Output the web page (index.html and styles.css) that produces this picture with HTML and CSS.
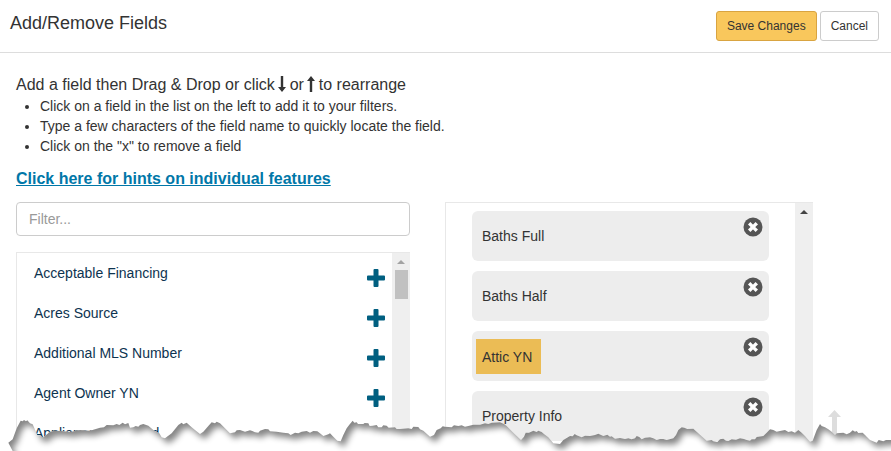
FILE: index.html
```html
<!DOCTYPE html>
<html lang="en">
<head>
    <meta charset="UTF-8">
    <meta name="viewport" content="width=device-width, initial-scale=1.0">
    <title>Add/Remove Fields</title>
    <link rel="stylesheet" href="styles.css">
</head>
<body>
    <!-- icon shapes -->
    <svg class="sprite" aria-hidden="true">
        <symbol id="plus" viewBox="0 0 18 18">
            <path d="M7.5 0h3q1 0 1 1v5.500H17q1 0 1 1v3q0 1-1 1h-5.500V17q0 1-1 1h-3q-1 0-1-1v-5.500H1q-1 0-1-1v-3q0-1 1-1h5.500V1q0-1 1-1z"/>
        </symbol>
        <symbol id="remove" viewBox="0 0 20 20">
            <circle cx="10" cy="10" r="9.500"/>
            <path d="M7.400 7.400l5.200 5.200M12.600 7.400l-5.200 5.200" stroke="#fff" stroke-width="3.400" stroke-linecap="square"/>
        </symbol>
        <symbol id="arrow" viewBox="0 0 8 16">
            <path d="M4 0l4 5H5.200v11H2.800V5H0z"/>
        </symbol>
    </svg>

    <header class="header">
        <h1 class="title">Add/Remove Fields</h1>
        <div class="actions">
            <button class="btn btn-save" type="button">Save Changes</button>
            <button class="btn" type="button">Cancel</button>
        </div>
    </header>

    <main class="content">
        <h2 class="subtitle">Add a field then Drag &amp; Drop or click <svg class="arrow down"><use href="#arrow"/></svg> or <svg class="arrow"><use href="#arrow"/></svg> to rearrange</h2>
        <ul class="tips">
            <li>Click on a field in the list on the left to add it to your filters.</li>
            <li>Type a few characters of the field name to quickly locate the field.</li>
            <li>Click on the "x" to remove a field</li>
        </ul>
        <a class="hints" href="#hints">Click here for hints on individual features</a>

        <div class="columns">
            <section class="available">
                <input class="filter" type="text" placeholder="Filter..." aria-label="Filter">
                <div class="panel">
                    <ul class="fields">
                        <li><button class="field" type="button">Acceptable Financing <svg class="plus"><use href="#plus"/></svg></button></li>
                        <li><button class="field" type="button">Acres Source <svg class="plus"><use href="#plus"/></svg></button></li>
                        <li><button class="field" type="button">Additional MLS Number <svg class="plus"><use href="#plus"/></svg></button></li>
                        <li><button class="field" type="button">Agent Owner YN <svg class="plus"><use href="#plus"/></svg></button></li>
                        <li><button class="field" type="button">Appliances Included</button></li>
                    </ul>
                    <div class="rail">
                        <span class="rail-up"></span>
                        <span class="thumb"></span>
                    </div>
                </div>
            </section>

            <section class="panel">
                <ul class="cards">
                    <li class="card"><span>Baths Full</span><button class="remove" type="button" aria-label="Remove Baths Full"><svg><use href="#remove"/></svg></button></li>
                    <li class="card"><span>Baths Half</span><button class="remove" type="button" aria-label="Remove Baths Half"><svg><use href="#remove"/></svg></button></li>
                    <li class="card"><span class="highlight">Attic YN</span><button class="remove" type="button" aria-label="Remove Attic YN"><svg><use href="#remove"/></svg></button></li>
                    <li class="card"><span>Property Info</span><button class="remove" type="button" aria-label="Remove Property Info"><svg><use href="#remove"/></svg></button></li>
                </ul>
                <div class="rail rail-dark">
                    <span class="rail-up"></span>
                </div>
            </section>
        </div>
    </main>

    <a class="to-top" href="#" aria-label="Back to top"><svg viewBox="0 0 13 27"><path d="M6.500 0L13 7H9v20H4V7H0z"/></svg></a>

    <!-- torn paper edge -->
    <svg class="torn" viewBox="0 0 2673 213" preserveAspectRatio="none" aria-hidden="true">
        <filter id="shade" filterUnits="userSpaceOnUse" x="-60" y="0" width="2800" height="320" color-interpolation-filters="sRGB">
            <feGaussianBlur in="SourceAlpha" stdDeviation="10"/>
            <feOffset dx="11" dy="14" result="moved"/>
            <feFlood flood-color="#858585"/>
            <feComposite operator="out" in2="moved"/>
            <feComposite operator="in" in2="SourceAlpha" result="shadow"/>
            <feMerge><feMergeNode in="SourceGraphic"/><feMergeNode in="shadow"/></feMerge>
        </filter>
        <path fill="#fff" filter="url(#shade)" d="M25 188L38 178L50 145L62 122L68 124L72 120L78 124L82 121L90 130L98 133L112 165L130 172L150 155L165 152L185 153L210 156L240 150L270 152L285 148L300 143L312 142L320 135L340 136L350 132L358 135L368 128L375 133L385 129L390 143L400 142L407 138L415 140L420 135L430 132L445 137L460 150L478 160L485 172L495 175L515 160L535 135L545 128L550 133L560 128L575 142L585 150L600 162L610 155L625 138L635 127L645 130L650 125L660 130L672 142L690 160L705 157L710 151L720 150L735 155L750 151L757 153L765 157L775 158L780 152L795 147L805 148L810 154L830 155L850 158L865 160L872 165L885 158L895 160L905 155L920 153L930 158L940 153L952 154L958 158L970 168L985 163L990 160L1000 170L1012 182L1022 184L1030 165L1040 145L1048 134L1058 122L1063 128L1070 127L1074 132L1090 132L1094 129L1105 130L1109 138L1118 137L1130 135L1135 142L1145 142L1150 136L1160 137L1166 143L1185 142L1190 147L1200 147L1225 145L1235 147L1240 140L1255 141L1260 148L1270 152L1290 170L1302 165L1310 150L1322 145L1328 139L1335 140L1355 142L1362 136L1375 138L1385 136L1395 140L1405 138L1420 134L1440 134L1455 130L1465 132L1475 128L1500 127L1512 132L1520 138L1540 158L1563 180L1572 170L1577 158L1587 158L1600 152L1610 156L1615 152L1625 156L1632 162L1645 172L1660 190L1680 192L1690 180L1710 168L1718 169L1724 162L1730 166L1745 172L1755 167L1770 168L1785 165L1795 161L1810 168L1822 164L1830 170L1835 169L1845 176L1860 174L1875 177L1885 175L1895 178L1905 175L1910 168L1918 171L1925 178L1935 173L1950 172L1960 175L1970 180L1980 177L1990 177L2000 180L2020 175L2028 165L2035 150L2045 142L2053 143L2062 147L2080 146L2095 160L2120 182L2135 180L2140 184L2152 186L2160 178L2170 176L2178 182L2185 183L2195 178L2208 179L2220 175L2232 177L2240 180L2250 182L2255 178L2265 178L2270 171L2290 168L2300 158L2310 148L2320 150L2330 155L2340 153L2355 150L2365 156L2375 154L2385 158L2395 150L2405 158L2415 168L2430 185L2438 182L2450 150L2460 132L2465 138L2475 142L2485 148L2495 155L2505 165L2510 160L2530 158L2540 163L2550 158L2558 151L2565 155L2570 153L2575 159L2588 158L2595 165L2610 180L2630 188L2636 180L2650 184L2658 180L2720 180V300H38V213z"/>
    </svg>
</body>
</html>
```

FILE: styles.css
```css
* {
    box-sizing: border-box;
}
body {
    position: relative;
    height: 100vh;
    margin: 0;
    overflow: hidden;
    background: #fff;
    color: #333;
    font-family: Arial, "Liberation Sans", sans-serif;
    font-size: 14px;
    line-height: 20px;
}
button, input {
    font: inherit;
    color: inherit;
}
ul {
    margin: 0;
    padding: 0;
    list-style: none;
}
svg {
    display: block;
}
.sprite {
    position: absolute;
    width: 0;
    height: 0;
}

/* header */
.header {
    display: flex;
    justify-content: space-between;
    align-items: flex-start;
    padding: 11px 12px 11px 10px;
    border-bottom: 1px solid #ddd;
}
.title {
    margin: 0;
    font-size: 18px;
    font-weight: normal;
    line-height: 24px;
}
.actions {
    display: flex;
    gap: 3px;
}
.btn {
    height: 30px;
    padding: 0 10px;
    border: 1px solid #ccc;
    border-radius: 3px;
    background: #fff;
    font-size: 12px;
}
.btn-save {
    border-color: #d9a441;
    background: #f9c75c;
}

/* instructions */
.content {
    padding: 20px 78px 0 16px;
}
.subtitle {
    margin: 0;
    font-size: 16px;
    font-weight: normal;
    line-height: 23px;
}
.arrow {
    display: inline-block;
    width: 8px;
    height: 16px;
    margin: 0 -1px;
    vertical-align: -2px;
}
.down {
    transform: rotate(180deg);
}
.arrow, .remove svg {
    fill: currentColor;
}
.tips {
    margin-bottom: 12px;
    padding-left: 24px;
    list-style: disc;
}
.hints {
    display: block;
    color: #0077a8;
    font-size: 16px;
    font-weight: bold;
    line-height: 22px;
}

/* the two lists */
.columns {
    display: grid;
    grid-template-columns: 394fr 368fr;
    gap: 35px;
    margin-top: 12px;
}
.available {
    display: flex;
    flex-direction: column;
    gap: 16px;
}
.filter {
    width: 100%;
    height: 34px;
    padding: 0 12px;
    border: 1px solid #ccc;
    border-radius: 4px;
}
.filter::placeholder {
    color: #999;
    opacity: 1;
}
.panel {
    display: flex;
    border: 1px solid #e8e8e8;
    border-right: 0;
}
.fields, .cards {
    flex: 1;
}
.field {
    display: flex;
    justify-content: space-between;
    align-items: center;
    width: 100%;
    height: 40px;
    padding: 0 7px 0 17px;
    border: 0;
    background: none;
    color: #0d3350;
    text-align: left;
}
.plus {
    width: 18px;
    height: 18px;
    margin-top: 10px;
    fill: #005f80;
}
.cards {
    padding: 8px 26px;
}
.card {
    display: flex;
    justify-content: space-between;
    align-items: center;
    height: 50px;
    margin-bottom: 10px;
    padding: 0 6px 0 10px;
    border-radius: 6px;
    background: #ededed;
}
.highlight {
    margin-left: -6px;
    padding: 8px 9px 7px 6px;
    background: #ebbc55;
}
.remove {
    align-self: flex-start;
    padding: 6px 0 0;
    border: 0;
    background: none;
    color: #555;
}
.remove svg {
    width: 20px;
    height: 20px;
}
.rail {
    display: flex;
    flex-direction: column;
    align-items: center;
    width: 18px;
    padding-top: 7px;
    background: #efefef;
}
.rail-up {
    border: 4px solid transparent;
    border-top: 0;
    border-bottom-color: #a3a3a3;
}
.rail-dark .rail-up {
    border-bottom-color: #444;
}
.thumb {
    width: 13px;
    height: 29px;
    margin-top: 6px;
    background: #c1c1c1;
}

.to-top {
    position: absolute;
    right: 50px;
    bottom: 14px;
}
.to-top svg {
    width: 13px;
    height: 27px;
    fill: #ddd;
}
.torn {
    position: absolute;
    left: 0;
    bottom: 0;
    width: 100%;
    height: 71px;
}
```
